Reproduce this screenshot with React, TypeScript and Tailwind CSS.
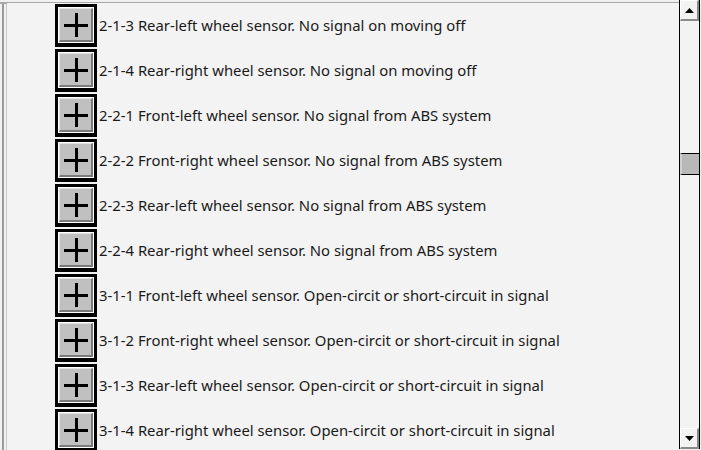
import React from "react";

const rows = [
  "2-1-3 Rear-left wheel sensor. No signal on moving off",
  "2-1-4 Rear-right wheel sensor. No signal on moving off",
  "2-2-1 Front-left wheel sensor. No signal from ABS system",
  "2-2-2 Front-right wheel sensor. No signal from ABS system",
  "2-2-3 Rear-left wheel sensor. No signal from ABS system",
  "2-2-4 Rear-right wheel sensor. No signal from ABS system",
  "3-1-1 Front-left wheel sensor. Open-circit or short-circuit in signal",
  "3-1-2 Front-right wheel sensor. Open-circit or short-circuit in signal",
  "3-1-3 Rear-left wheel sensor. Open-circit or short-circuit in signal",
  "3-1-4 Rear-right wheel sensor. Open-circit or short-circuit in signal",
];

const PlusButton: React.FC = () => (
  <div className="w-[42px] h-[43px] shrink-0 border-[3px] border-b-[4px] border-black bg-white p-[1px]">
    <div className="w-full h-full bg-[#c0c0c0] border-r-2 border-b-2 border-[#7a7a7a] border-t border-l border-t-[#e0e0e0] border-l-[#e0e0e0] flex items-center justify-center">
      <svg width="26" height="26" viewBox="0 0 26 26">
        <rect x="12" y="1" width="3" height="24" fill="#000" />
        <rect x="1" y="12" width="24" height="3" fill="#000" />
      </svg>
    </div>
  </div>
);

const ArrowBox: React.FC<{ up?: boolean }> = ({ up }) => (
  <div className="h-[21px] w-full bg-[#f3f3f3] border-t border-l border-white border-r-2 border-b-2 border-r-[#8a8a8a] border-b-[#8a8a8a] flex items-center justify-center">
    <svg width="9" height="5" viewBox="0 0 9 5">
      {up ? (
        <polygon points="4.5,0 9,5 0,5" fill="#000" />
      ) : (
        <polygon points="0,0 9,0 4.5,5" fill="#000" />
      )}
    </svg>
  </div>
);

export default function App() {
  return (
    <div
      className="w-[701px] h-[450px] bg-[#f0f0f0] flex overflow-hidden"
      style={{ fontFamily: '"Noto Sans", "Open Sans", sans-serif' }}
    >
      <div className="flex-1 pt-[2px]">
        <div className="h-full border-t-2 border-[#a8a8a8] flex">
          <div className="w-[3px] border-r-2 border-[#9a9a9a] ml-[1px]" />
          <div className="w-[3px] border-r border-[#c8c8c8]" />
          <div className="flex-1 bg-[#f3f3f3] pl-[48px] -mt-[1px]">
            {rows.map((r) => (
              <div key={r} className="h-[45px] flex items-center">
                <PlusButton />
                <span className="ml-[2px] text-[14.85px] text-[#1a1a1a] whitespace-nowrap">{r}</span>
              </div>
            ))}
          </div>
        </div>
      </div>
      <div className="w-[21px] mr-[1px] h-[449px] flex flex-col border-l border-r border-black bg-[#f3f3f3]">
        <ArrowBox up />
        <div className="flex-1 flex flex-col pt-[132px]">
          <div className="h-[22px] border-t border-b border-black bg-[#b8b8b8] border-l-2 border-l-[#d0d0d0]" />
        </div>
        <ArrowBox />
      </div>
    </div>
  );
}
